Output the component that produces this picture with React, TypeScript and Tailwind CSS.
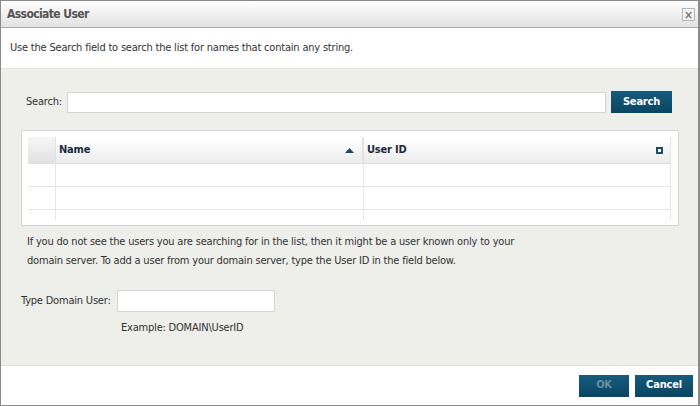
import { useState } from "react";

const font = "font-['Tahoma','DejaVu_Sans_Condensed','DejaVu_Sans',sans-serif]";

export default function App() {
  const [search, setSearch] = useState("");
  const [domainUser, setDomainUser] = useState("");

  return (
    <div className={`flex h-[406px] w-[700px] flex-col border border-r-2 border-[#8a8a8a] bg-white text-[11px] tracking-[-0.2px] text-[#333] ${font}`}>
      {/* title bar */}
      <div className="flex h-[27px] shrink-0 items-center justify-between border-b border-[#a9a9a9] bg-gradient-to-b from-white to-[#e2e2e2] pl-[6px] pr-[3px]">
        <span className="text-[12px] font-bold tracking-[-0.6px] text-[#555]">Associate User</span>
        <button type="button" className="mt-[1px] flex h-[13px] w-[13px] items-center justify-center border border-[#b5b5b5] bg-[#f4f4f4] text-[12px] font-bold leading-none text-[#777]">
          ×
        </button>
      </div>

      <div className="flex h-[40px] shrink-0 items-center px-[9px]">
        Use the Search field to search the list for names that contain any string.
      </div>

      <div className="flex flex-1 flex-col border-t border-[#e2e2de] bg-[#eeeeeb]">
        <div className="mt-[22px] flex items-center pl-[25px] pr-[26px]">
          <label className="mr-[5px]">Search:</label>
          <input value={search} onChange={(e) => setSearch(e.target.value)} className="h-[21px] flex-1 border border-[#d4d4d4] bg-white px-[3px] outline-none" />
          <button type="button" className="ml-[5px] h-[22px] w-[61px] bg-gradient-to-b from-[#175b7c] to-[#0a4563] text-[11px] font-bold text-white">
            Search
          </button>
        </div>

        <div className="ml-[20px] mr-[19px] mt-[17px] h-[96px] border border-[#d6d6d6] bg-white pl-[6px] pr-[7px] pt-[6px]">
          <div className="h-[83px] overflow-hidden">
            <div className="flex h-[27px] border-b border-[#dedede]">
              <div className="w-[28px] border-r border-[#e2e2e2] bg-gradient-to-b from-[#f6f6f6] to-[#e2e2e2]" />
              <div className="flex w-[308px] items-center justify-between border-r-2 border-[#e2e2e2] bg-gradient-to-b from-white to-[#ececec] pl-[3px] pr-[8px]">
                <span className="font-bold text-[#1e2b3c]">Name</span>
                <svg width="9" height="5" viewBox="0 0 9 5"><path d="M0 5 L4.5 0 L9 5 Z" fill="#1b4b66" /></svg>
              </div>
              <div className="flex flex-1 items-center justify-between border-r border-[#e2e2e2] bg-gradient-to-b from-white to-[#ececec] pl-[3px] pr-[7px]">
                <span className="font-bold text-[#1e2b3c]">User ID</span>
                <span className="flex h-[7px] w-[7px] items-center justify-center bg-[#1b4b66]">
                  <span className="h-[3px] w-[3px] bg-white" />
                </span>
              </div>
            </div>
            {[0, 1, 2].map((i) => (
              <div key={i} className="flex h-[23px] border-b border-[#e4e4e4]">
                <div className="w-[28px] border-r border-[#e6e6e6]" />
                <div className="w-[308px] border-r border-[#e6e6e6]" />
                <div className="flex-1 border-r border-[#e6e6e6]" />
              </div>
            ))}
          </div>
        </div>

        <p className="ml-[26px] mt-[6px] leading-[19px]">
          If you do not see the users you are searching for in the list, then it might be a user known only to your
          <br />
          domain server. To add a user from your domain server, type the User ID in the field below.
        </p>

        <div className="ml-[20px] mt-[20px] flex items-center">
          <label className="mr-[6px]">Type Domain User:</label>
          <input value={domainUser} onChange={(e) => setDomainUser(e.target.value)} className="h-[22px] w-[158px] border border-[#d4d4d4] bg-white px-[3px] outline-none" />
        </div>

        <div className="ml-[120px] mt-[8px]">Example: DOMAIN\UserID</div>
      </div>

      <div className="flex h-[40px] shrink-0 items-center justify-end gap-[6px] border-t border-[#dedede] pr-[5px]">
        <button type="button" disabled className="h-[22px] w-[50px] bg-gradient-to-b from-[#175b7c] to-[#0a4563] font-bold text-[#6b8fa3]">
          OK
        </button>
        <button type="button" className="h-[22px] w-[58px] bg-gradient-to-b from-[#175b7c] to-[#0a4563] font-bold text-white">
          Cancel
        </button>
      </div>
    </div>
  );
}
